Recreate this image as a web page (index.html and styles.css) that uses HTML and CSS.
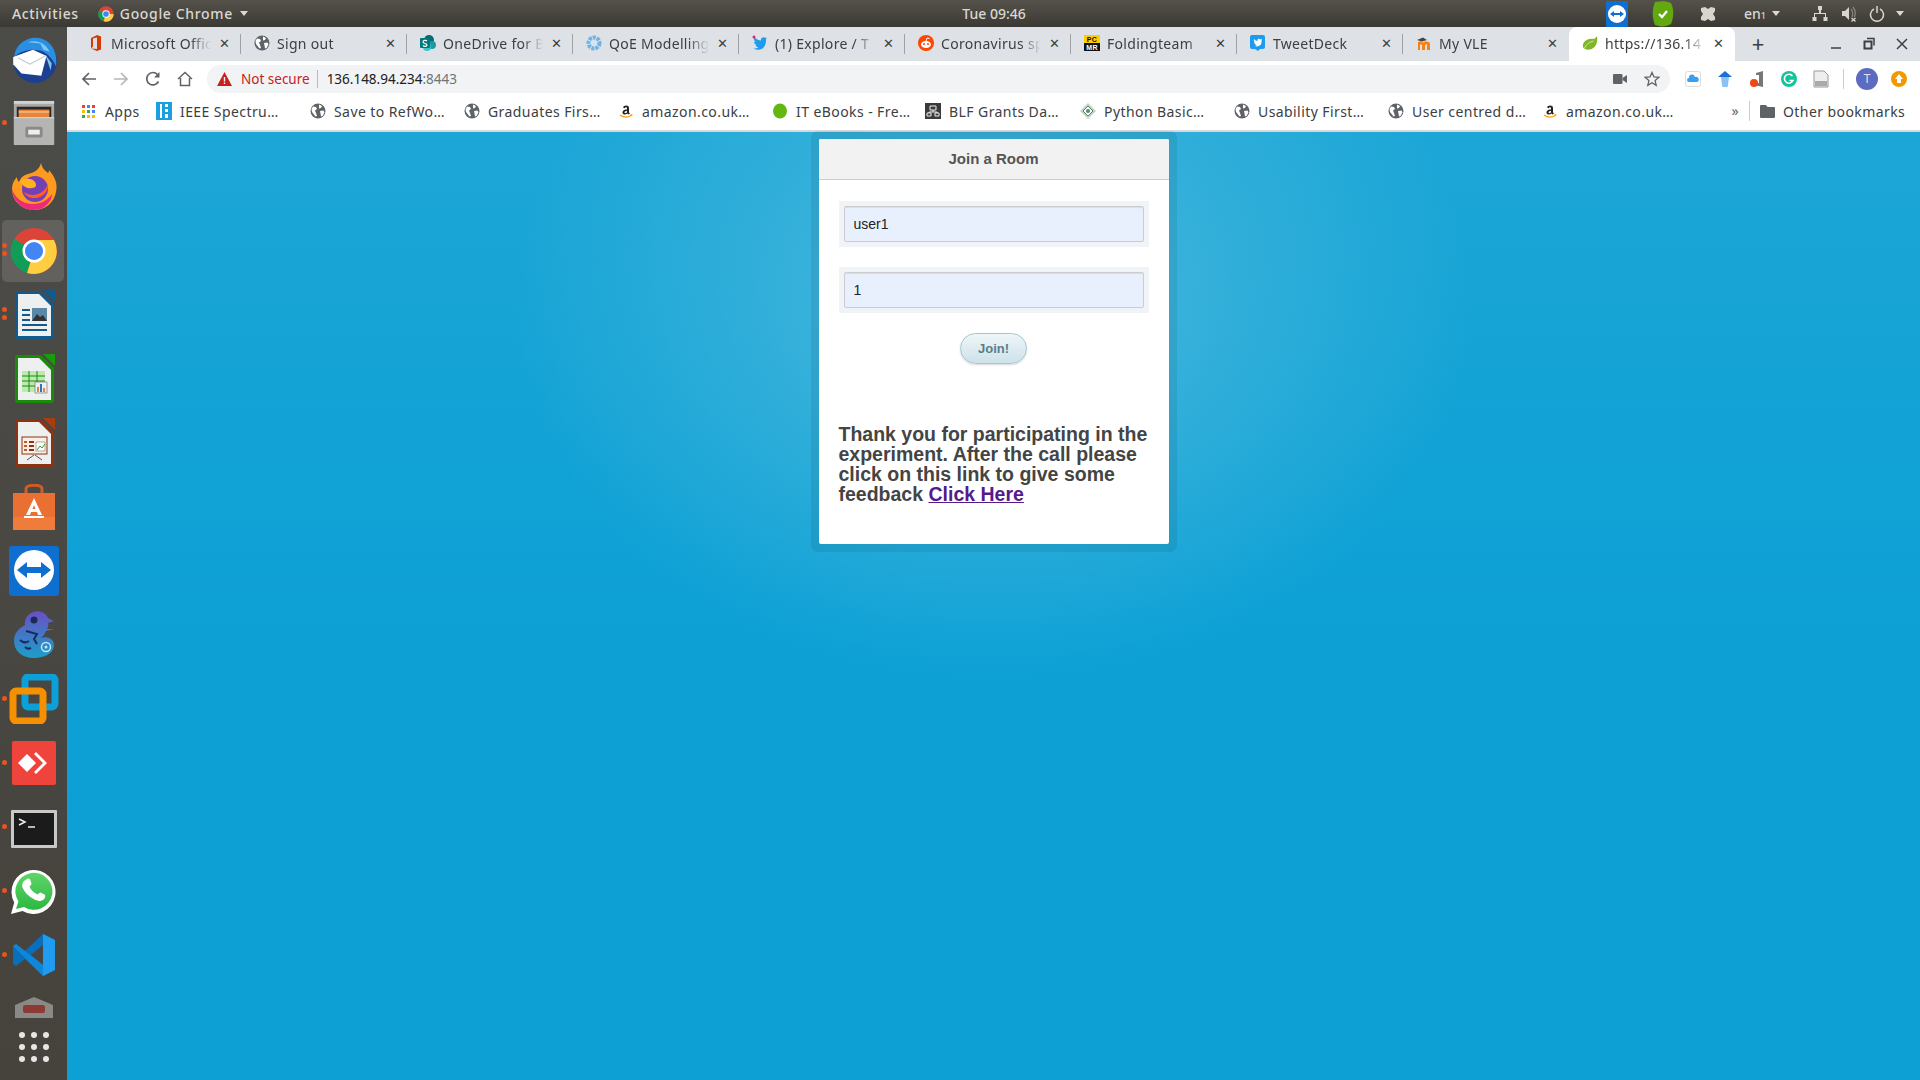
FILE: index.html
```html
<!doctype html>
<html>
<head>
<meta charset="utf-8">
<title>Join a Room</title>
<link rel="stylesheet" href="styles.css">
</head>
<body>
<svg class="defs" width="0" height="0">
  <defs>
    <linearGradient id="chameleon" x1="0" y1="0" x2="0" y2="1"><stop offset="0" stop-color="#6a4fc4"/><stop offset="1" stop-color="#1a9fc9"/></linearGradient>
    <linearGradient id="wa" x1="0" y1="0" x2="0" y2="1"><stop offset="0" stop-color="#5fd568"/><stop offset="1" stop-color="#2db842"/></linearGradient>
  </defs>
  <symbol id="globe" viewBox="0 0 16 16">
    <circle cx="8" cy="8" r="7.500" fill="#5f6368"/>
    <path d="M3 3.500l3 .5 1 2-2 1.500 1 2.500 1 3-1.500 .5L2 9 1.500 6zM9 1.500l3 1.500-1 2-2 .5zM10 8l3.500-.5 1 2-2 3.500-1.500 .5-.5-3z" fill="#fff"/>
  </symbol>
  <symbol id="amazon" viewBox="0 0 16 16">
    <path d="M5 4.500C5.500 2 11 1.500 11 5v4.500l1 1-1.500 1-1-1c-1.500 1.500-5 1.500-5-1 0-2.500 3-3 4.500-3V5.500C9 4 7 4 6.700 5.300zM9 8C7.500 8 6.500 8.500 6.500 9.500S8.500 10.500 9 9z" fill="#222"/>
    <path d="M2 12c3.500 2.500 8 2.500 11 .5" fill="none" stroke="#f90" stroke-width="1.300"/>
    <path d="M12 11.500l2.500-.5-.5 2.500z" fill="#f90"/>
  </symbol>
</svg>

<div class="topbar">
  <div class="top-left">
    <span class="top-item">Activities</span>
    <span class="top-app">
      <svg width="16" height="16" viewBox="0 0 48 48"><circle cx="24" cy="24" r="23" fill="#db4437"/><path d="M24 24L4 12A23 23 0 0 0 17 46z" fill="#0f9d58"/><path d="M24 24h23a23 23 0 0 1-30 22z" fill="#ffcd40"/><circle cx="24" cy="24" r="11" fill="#fff"/><circle cx="24" cy="24" r="8.500" fill="#4285f4"/></svg>
      <span class="top-item">Google Chrome</span>
      <i class="caret"></i>
    </span>
  </div>
  <div class="clock">Tue 09:46</div>
  <div class="tray">
    <svg class="tray-tv" width="22" height="26" viewBox="0 0 22 26"><rect width="22" height="26" fill="#0e6fd0"/><circle cx="11" cy="13" r="9" fill="#fff"/><path d="M4 13l4-3v2h6v-2l4 3-4 3v-2H8v2z" fill="#0e6fd0"/></svg>
    <svg class="tray-shield" width="22" height="26" viewBox="0 0 22 26"><path d="M3 1c6-1 12-1 16 1 3 6 3 14 0 21-5 3-11 3-16 1C0 17 0 8 3 1z" fill="#62a80f"/><path d="M7 13l3 3 5-6" fill="none" stroke="#fff" stroke-width="2.200"/></svg>
    <svg class="tray-drop" width="18" height="18" viewBox="0 0 18 18"><path d="M2 3l4-1 3 2 3-2 4 1v3l-2 3 2 3v3l-4 1-3-2-3 2-4-1v-3l2-3-2-3z" fill="#d8d5cc"/></svg>
    <span class="tray-lang">en<small>1</small></span>
    <i class="caret tray-caret"></i>
    <svg class="tray-net" width="16" height="16" viewBox="0 0 16 16"><path d="M6 0h4v4H9v3h5v4h1.500v4h-4v-4H13V8H3v3h1.500v4h-4v-4H2V7h5V4H6z" fill="#d8d5cc"/></svg>
    <svg class="tray-vol" width="16" height="16" viewBox="0 0 16 16"><path d="M1 5h3l4-4v13l-4-4H1z" fill="#d8d5cc"/><path d="M10 3c2 2 2 6 1 8M12 1c2.500 3 2.500 7 1.500 10" fill="none" stroke="#8a8780" stroke-width="1.200"/><path d="M10.500 12l4 3.500M14.500 12l-4 3.500" stroke="#d8d5cc" stroke-width="1.300"/></svg>
    <svg class="tray-pow" width="16" height="16" viewBox="0 0 16 16"><path d="M5 3a6.500 6.500 0 1 0 6 0" fill="none" stroke="#d8d5cc" stroke-width="1.500"/><path d="M8 0v7" stroke="#d8d5cc" stroke-width="1.500"/></svg>
    <i class="caret"></i>
  </div>
</div>

<div class="desktop">
  <div class="dock">
    <div class="dock-item"><svg width="50" height="50" viewBox="0 0 48 48"><circle cx="25" cy="26" r="21" fill="#1d3f8f"/><path d="M5 22C6 9 20 0 33 5c9 4 14 14 12 26-3-7-7-11-12-14-8-3-19-3-28 5z" fill="#2a8fe0"/><path d="M18 8c9-3 17 1 21 9l-6-2-3-6zM35 20l6 8-1 7z" fill="#7cc7f4"/><path d="M4 22l19-7 13 6-5 19-19-2-8-9z" fill="#fff"/><path d="M9 23l11 6 15-8" fill="none" stroke="#b9c4d4" stroke-width="1"/></svg></div>
    <div class="dock-item running"><svg width="46" height="46" viewBox="0 0 48 48"><rect x="3" y="1" width="42" height="46" rx="2" fill="#a9a9a8"/><rect x="3" y="1" width="42" height="3" fill="#d2d2d0"/><rect x="6" y="7" width="36" height="11" fill="#2a2a2a"/><rect x="8" y="10" width="32" height="8" fill="#e8853a"/><rect x="8" y="12" width="32" height="1" fill="#f7d9b8"/><rect x="3" y="18" width="42" height="29" fill="#b4b4b2"/><rect x="3" y="18" width="42" height="1" fill="#dedede"/><rect x="15" y="28" width="18" height="11" rx="2" fill="#8a8a88"/><rect x="18" y="31" width="12" height="5" fill="#eee"/></svg></div>
    <div class="dock-item"><svg width="48" height="50" viewBox="0 0 48 50"><path d="M31 1c1 5 4 8 7 10 1-1 1-2 1-3 6 7 9 14 7 22-2 11-11 18-22 18C12 48 2 39 2 27c0-5 2-9 5-12 0 3 1 4 2 5 2-5 5-7 9-8 4-1 11-3 13-11z" fill="#ff9a1f"/><path d="M24 48C13 48 3 40 2 27c3 9 11 15 21 15 8 0 15-4 19-10 0 3-1 5-2 7-4 6-10 9-16 9z" fill="#ee2a7b"/><circle cx="25" cy="27" r="13" fill="#7540b5"/><path d="M10 19c5-3 12-3 15 1 2 3 1 6-3 6-4 1-8-1-10-4z" fill="#ffb21f"/><path d="M38 21c1 8-5 15-13 15-5 0-9-2-11-6 4 3 9 4 14 2 5-2 9-6 10-11z" fill="#ff5c2b"/></svg></div>
    <div class="dock-item active running two"><svg width="48" height="48" viewBox="0 0 48 48"><circle cx="24" cy="24" r="23" fill="#db4437"/><path d="M24 24L4 12A23 23 0 0 0 17 46z" fill="#0f9d58"/><path d="M24 13h20a23 23 0 0 1-27 33l7-22z" fill="#ffcd40"/><path d="M24 24L14 30 4 12l10 6z" fill="#0f9d58"/><circle cx="24" cy="24" r="11.500" fill="#fff"/><circle cx="24" cy="24" r="9" fill="#4285f4"/></svg></div>
    <div class="dock-item running two"><svg width="42" height="50" viewBox="0 0 42 50"><path d="M2 3a2 2 0 0 1 2-2h24l13 13v32a3 3 0 0 1-3 3H4a3 3 0 0 1-2-3z" fill="#135a8c"/><path d="M5 4h21l12 12v30H5z" fill="#eef0f0"/><path d="M30 0h12v12z" fill="#135a8c"/><rect x="9" y="19" width="8" height="2" fill="#135a8c"/><rect x="9" y="24" width="8" height="2" fill="#135a8c"/><rect x="9" y="29" width="8" height="2" fill="#135a8c"/><rect x="9" y="34" width="25" height="2" fill="#135a8c"/><rect x="9" y="39" width="25" height="2" fill="#135a8c"/><rect x="19" y="18" width="15" height="13" fill="#5c88a8"/><path d="M19 31l5-7 3 3 3-2 4 6z" fill="#333"/></svg></div>
    <div class="dock-item"><svg width="42" height="50" viewBox="0 0 42 50"><path d="M2 3a2 2 0 0 1 2-2h24l13 13v32a3 3 0 0 1-3 3H4a3 3 0 0 1-2-3z" fill="#1b8a0b"/><path d="M5 4h21l12 12v30H5z" fill="#eef0f0"/><path d="M30 0h12v12z" fill="#1b9a0b"/><rect x="9" y="17" width="23" height="21" fill="#bdeab0"/><path d="M9 22h23M9 27h23M9 32h23M16 17v21M24 17v21" stroke="#1b8a0b" stroke-width="1"/><rect x="22" y="28" width="12" height="11" fill="#eee" stroke="#666" stroke-width=".6"/><rect x="24" y="33" width="2" height="5" fill="#e8853a"/><rect x="27" y="30" width="2" height="8" fill="#2a74c0"/><rect x="30" y="34" width="2" height="4" fill="#d84"/></svg></div>
    <div class="dock-item"><svg width="42" height="50" viewBox="0 0 42 50"><path d="M2 3a2 2 0 0 1 2-2h24l13 13v32a3 3 0 0 1-3 3H4a3 3 0 0 1-2-3z" fill="#8a3412"/><path d="M5 4h21l12 12v30H5z" fill="#eef0f0"/><path d="M30 0h12v12z" fill="#a63e10"/><rect x="9" y="19" width="25" height="17" fill="#fbeee4" stroke="#8a3412" stroke-width="1"/><rect x="11" y="23" width="3" height="2" fill="#c85a1e"/><rect x="11" y="27" width="3" height="2" fill="#c85a1e"/><rect x="11" y="31" width="3" height="2" fill="#c85a1e"/><rect x="16" y="23" width="5" height="2" fill="#8a3412"/><rect x="16" y="27" width="5" height="2" fill="#8a3412"/><rect x="16" y="31" width="5" height="2" fill="#8a3412"/><rect x="23" y="24" width="9" height="9" fill="#fff" stroke="#777" stroke-width=".6"/><path d="M24 32l3-4 2 2 3-4" fill="none" stroke="#3a9a20" stroke-width="1"/><path d="M21 37l-7 5M22 37l7 5" stroke="#555" stroke-width="1"/></svg></div>
    <div class="dock-item"><svg width="44" height="46" viewBox="0 0 44 46"><path d="M14 10V5c0-5 16-5 16 0v5" fill="none" stroke="#d45a25" stroke-width="3"/><path d="M1 9h42v37H1z" fill="#f07c3c"/><path d="M1 9h42v24H1z" fill="#e96f32"/><path d="M22 14l8 17h-4l-1-3h-6l-1 3h-4zM20.500 25h3L22 21zM12 32h20v2H12z" fill="#fff"/></svg></div>
    <div class="dock-item"><svg width="50" height="50" viewBox="0 0 50 50"><rect width="50" height="50" rx="3" fill="#0e6fd0"/><circle cx="25" cy="24" r="20" fill="#fff"/><path d="M8 24l10-8v5h14v-5l10 8-10 8v-5H18v5z" fill="#0e6fd0"/></svg></div>
    <div class="dock-item"><svg width="42" height="48" viewBox="0 0 42 48"><path d="M20 1c6-2 13 1 15 6l6 3-6 2c1 2 0 4-1 6h7l-8 2c-1 3-3 5-5 7 5-2 13 0 13 7 0 8-9 13-20 13C9 47 1 40 1 30c0-8 5-13 11-16-1-6 3-11 8-13z" fill="url(#chameleon)"/><circle cx="21" cy="9" r="3.500" fill="#1c2a5a"/><path d="M13 20l11 3-3 5 3 5M7 29c3 3 6 3 9 1M12 36c2 2 4 2 6 1" fill="none" stroke="#1c2a5a" stroke-width="2"/><circle cx="33" cy="36" r="4.500" fill="none" stroke="#bfe7f5" stroke-width="1.500"/><circle cx="33" cy="36" r="1.500" fill="#bfe7f5"/></svg></div>
    <div class="dock-item running"><svg width="50" height="50" viewBox="0 0 50 50"><rect x="16" y="3" width="30" height="30" rx="3" fill="none" stroke="#0c9fd8" stroke-width="7"/><rect x="4" y="17" width="30" height="30" rx="3" fill="none" stroke="#f59000" stroke-width="7"/></svg></div>
    <div class="dock-item running"><svg width="44" height="44" viewBox="0 0 44 44"><rect width="44" height="44" rx="2" fill="#ef443b"/><path d="M6 22l9-9 9 9-9 9z" fill="#fff"/><path d="M24 11l11 11-11 11-2-2 9-9-9-9z" fill="#fff"/></svg></div>
    <div class="dock-item running term"><svg width="46" height="38" viewBox="0 0 46 38"><rect width="46" height="38" rx="1" fill="#c8c8c8"/><rect x="3" y="3" width="40" height="32" fill="#1b1b1b"/><path d="M8 9l6 3-6 3" fill="none" stroke="#eee" stroke-width="1.500"/><path d="M17 17h7" stroke="#eee" stroke-width="1.500"/></svg></div>
    <div class="dock-item running"><svg width="46" height="46" viewBox="0 0 46 46"><path d="M0 46l3.200-11.500A22 22 0 1 1 11.500 43z" fill="#fff"/><path d="M5 41l2.400-7.500A18.500 18.500 0 1 1 13 39z" fill="url(#wa)"/><path d="M16 11c2-1 3 0 3.500 1.500l1 3c0 1-1 2-2 3 1 3 4 6 8 8 1-1 2-2 3-2l4 2c1 .500 1 2 0 4-2 3-6 3-10 1-6-3-10-7-12-12-1-4 1-7 4.500-8.500z" fill="#fff"/></svg></div>
    <div class="dock-item running"><svg width="44" height="44" viewBox="0 0 44 44"><path d="M31 1l12 6v30l-12 6L13 26l-9 7-3-2V13l3-2 9 7z" fill="#0a6fb8"/><path d="M31 1l12 6v30l-12 6z" fill="#1f9cf0"/><path d="M31 12L19 22l12 10z" fill="#474541"/><path d="M1 13l3-2 27 21v11z" fill="#0f86d8"/></svg></div>
    <div class="dock-item small"><svg width="40" height="22" viewBox="0 0 40 22"><path d="M1 9L20 1l19 8v13H1z" fill="#8b8985"/><rect x="9" y="9" width="22" height="8" rx="2" fill="#8e3a34"/></svg></div>
    <div class="dock-grid"><i></i><i></i><i></i><i></i><i></i><i></i><i></i><i></i><i></i></div>
  </div>

  <div class="browser">
    <div class="tabstrip">
      <div class="tab"><svg width="16" height="16" viewBox="0 0 16 16"><path d="M9 0l4 1.500v13L9 16 3 13.500 9 14V2.500L5 3.500v8l-2 2V3z" fill="#d83b01"/></svg><span class="tab-label">Microsoft Offic</span><span class="tab-x">✕</span></div>
      <div class="tab"><svg width="16" height="16"><use href="#globe"/></svg><span class="tab-label">Sign out</span><span class="tab-x">✕</span></div>
      <div class="tab"><svg width="16" height="16" viewBox="0 0 16 16"><circle cx="9" cy="5" r="5" fill="#036c70"/><circle cx="12" cy="10" r="4" fill="#1a9ba1"/><circle cx="7" cy="12" r="4" fill="#37c6d0"/><rect y="3" width="10" height="10" rx="1" fill="#03787c"/><path d="M7 6c-1-1-4-1-4 1s4 1 4 3-3 1.500-4 .5" fill="none" stroke="#fff" stroke-width="1.200"/></svg><span class="tab-label">OneDrive for B</span><span class="tab-x">✕</span></div>
      <div class="tab"><svg width="16" height="16" viewBox="0 0 16 16"><circle cx="8" cy="8" r="5.500" fill="none" stroke="#6db3e6" stroke-width="4" stroke-dasharray="3 1"/><circle cx="8" cy="8" r="2" fill="#cfe6f7"/></svg><span class="tab-label">QoE Modelling</span><span class="tab-x">✕</span></div>
      <div class="tab"><svg width="16" height="16" viewBox="0 0 16 16"><path d="M15 3c-.5.500-1 .500-1.500.700.500-.300 1-1 1-1.500-.5.300-1 .500-1.500.600C11.500 1.500 8.500 2.500 9 5.500 6.500 5.500 4 4 2.500 2 1.500 4 2 5.500 3.500 7c-.5 0-1 0-1.500-.5 0 2 1 3 3 3.500H3.500c.5 1.500 1.500 2 3 2-1 1-3 1.500-5 1.500 7 3.500 13-1 12.500-9z" fill="#1d9bf0"/><circle cx="2" cy="2" r="1.500" fill="#e0245e"/></svg><span class="tab-label">(1) Explore / T</span><span class="tab-x">✕</span></div>
      <div class="tab"><svg width="16" height="16" viewBox="0 0 16 16"><circle cx="8" cy="8" r="8" fill="#ff4500"/><ellipse cx="8" cy="9.500" rx="5" ry="3.500" fill="#fff"/><circle cx="6" cy="9" r="1" fill="#ff4500"/><circle cx="10" cy="9" r="1" fill="#ff4500"/><path d="M8 6l1-3 2.500 .5" fill="none" stroke="#fff"/></svg><span class="tab-label">Coronavirus sp</span><span class="tab-x">✕</span></div>
      <div class="tab"><svg width="16" height="16" viewBox="0 0 16 16"><rect width="16" height="8" fill="#ffcb05"/><rect y="8" width="16" height="8" fill="#111"/><text x="8" y="7" class="pcmr" fill="#111">PC</text><text x="8" y="15" class="pcmr" fill="#fff">MR</text></svg><span class="tab-label">Foldingteam</span><span class="tab-x">✕</span></div>
      <div class="tab"><svg width="16" height="16" viewBox="0 0 16 16"><rect width="15" height="14" rx="2" fill="#1d9bf0"/><path d="M5 14h5l-2 2z" fill="#1d9bf0"/><path d="M12 4l-1.500.500C9 3 7 4 7.500 6 6 6 5 5 4 4c-.500 1.500 0 2.500 1 3l-1 0c0 1 1 2 2 2l-1 .300c.500 .700 1 1 2 1-.500 .500-1.500 .700-2.500 .700 4 1.500 7.500-1 7-5z" fill="#fff"/></svg><span class="tab-label">TweetDeck</span><span class="tab-x">✕</span></div>
      <div class="tab"><svg width="16" height="16" viewBox="0 0 16 16"><path d="M2 15V8c0-2 4-2 5 0 1-2 7-2 7 1v6h-3V9.500H9V15H6V9.500H4V15z" fill="#f98012"/><path d="M1 5l6-2.500L11 5 6 6.500z" fill="#444"/></svg><span class="tab-label">My VLE</span><span class="tab-x">✕</span></div>
      <div class="tab tab-active"><svg width="16" height="16" viewBox="0 0 16 16"><path d="M15 1c1 6-1 12-7 13.500-3 .500-5.500-.500-6.500-1.500C-1 8 5 3 11 4c2 0 3-1.500 4-3z" fill="#7fb62a"/><path d="M2.500 13c2-4 5-6 9-7" fill="none" stroke="#e2efc7" stroke-width=".8"/></svg><span class="tab-label">https://136.14</span><span class="tab-x">✕</span></div>
      <div class="new-tab">+</div>
      <div class="win-btns">
        <svg width="14" height="14" viewBox="0 0 14 14"><path d="M2 11h10" stroke="#3c4043" stroke-width="1.500"/></svg>
        <svg width="14" height="14" viewBox="0 0 14 14"><path d="M5 1.500h7v7" fill="none" stroke="#3c4043" stroke-width="1.500"/><rect x="2.500" y="4.500" width="7" height="7" fill="none" stroke="#3c4043" stroke-width="2"/></svg>
        <svg width="14" height="14" viewBox="0 0 14 14"><path d="M2 2l10 10M12 2L2 12" stroke="#3c4043" stroke-width="1.500"/></svg>
      </div>
    </div>

    <div class="toolbar">
      <div class="nav-btns">
        <svg width="16" height="16" viewBox="0 0 16 16"><path d="M15 8H2M8 2L2 8l6 6" fill="none" stroke="#5f6368" stroke-width="1.700"/></svg>
        <svg width="16" height="16" viewBox="0 0 16 16"><path d="M1 8h13M8 2l6 6-6 6" fill="none" stroke="#b4b6b9" stroke-width="1.700"/></svg>
        <svg width="16" height="16" viewBox="0 0 16 16"><path d="M13.500 10.500A6.200 6.200 0 1 1 12.500 3.500" fill="none" stroke="#5f6368" stroke-width="1.700"/><path d="M14.500 1v5.500H9z" fill="#5f6368"/></svg>
        <svg width="16" height="16" viewBox="0 0 16 16"><path d="M1 8l7-6.500L15 8M3.500 7v7.500h9V7" fill="none" stroke="#5f6368" stroke-width="1.500"/></svg>
      </div>
      <div class="omnibox">
        <svg class="warn" width="15" height="14" viewBox="0 0 15 14"><path d="M7.500 0L15 14H0z" fill="#c5221f"/><path d="M6.800 5h1.400v4.500H6.800zM6.800 10.500h1.400v1.500H6.800z" fill="#fff"/></svg>
        <span class="not-secure">Not secure</span>
        <span class="url"><b>136.148.94.234</b>:8443</span>
        <span class="omni-right">
          <svg width="14" height="12" viewBox="0 0 14 12"><rect y="1" width="9.500" height="10" rx="1" fill="#5f6368"/><path d="M9.500 5L14 2v8L9.500 7z" fill="#5f6368"/></svg>
          <svg width="16" height="16" viewBox="0 0 16 16"><path d="M8 1.500l2 4.500 4.800 .4-3.700 3.200 1.100 4.800L8 11.800l-4.200 2.600 1.100-4.800L1.200 6.400 6 6z" fill="none" stroke="#5f6368" stroke-width="1.300"/></svg>
        </span>
      </div>
      <div class="ext-btns">
        <svg width="16" height="16" viewBox="0 0 16 16"><rect x=".5" y=".5" width="15" height="15" rx="2" fill="#fff" stroke="#ddd"/><path d="M4 11a2 2 0 0 1 0-4 3 3 0 0 1 6-1 2.500 2.500 0 0 1 2 5z" fill="#3a9ff0"/></svg>
        <svg width="16" height="16" viewBox="0 0 16 16"><path d="M8 0l7 6H1z" fill="#1a6fd8"/><path d="M4 6h8l-1 8a3 3 0 0 1-6 0z" fill="#8dc0f4"/></svg>
        <svg width="16" height="16" viewBox="0 0 16 16"><path d="M7 2l7-2v16l-7-1.500V12h3V4H7z" fill="#777"/><circle cx="5" cy="12" r="4" fill="#ea4b14"/></svg>
        <svg width="16" height="16" viewBox="0 0 16 16"><circle cx="8" cy="8" r="8" fill="#15c39a"/><path d="M11.500 5A4.500 4.500 0 1 0 12 9.500H8.500" fill="none" stroke="#fff" stroke-width="1.600"/></svg>
        <svg width="16" height="18" viewBox="0 0 16 18"><path d="M1 1h10l4 4v12H1z" fill="#eee" stroke="#999"/><rect x="2" y="11" width="12" height="5" fill="#aaa"/></svg>
        <i class="ext-sep"></i>
        <span class="avatar">T</span>
        <svg width="16" height="16" viewBox="0 0 16 16"><circle cx="8" cy="8" r="8" fill="#f29900"/><path d="M8 3l4 5H10v4H6V8H4z" fill="#fff"/></svg>
      </div>
    </div>

    <div class="bookmarks">
      <div class="bm bm-apps"><svg width="13" height="13" viewBox="0 0 13 13"><rect width="3" height="3" fill="#ea4335"/><rect x="5" width="3" height="3" fill="#4285f4"/><rect x="10" width="3" height="3" fill="#ea4335"/><rect y="5" width="3" height="3" fill="#fbbc05"/><rect x="5" y="5" width="3" height="3" fill="#34a853"/><rect x="10" y="5" width="3" height="3" fill="#4285f4"/><rect y="10" width="3" height="3" fill="#34a853"/><rect x="5" y="10" width="3" height="3" fill="#fbbc05"/><rect x="10" y="10" width="3" height="3" fill="#fbbc05"/></svg><span>Apps</span></div>
      <div class="bm"><svg width="16" height="18" viewBox="0 0 16 18"><rect width="16" height="18" fill="#1b9fe3"/><path d="M4 2h2v14H4zM9 2h3v3H9zM9 7h3v3H9zM9 12h3v4H9z" fill="#fff"/></svg><span>IEEE Spectru…</span></div>
      <div class="bm"><svg width="16" height="16"><use href="#globe"/></svg><span>Save to RefWo…</span></div>
      <div class="bm"><svg width="16" height="16"><use href="#globe"/></svg><span>Graduates Firs…</span></div>
      <div class="bm"><svg width="16" height="16"><use href="#amazon"/></svg><span>amazon.co.uk…</span></div>
      <div class="bm"><svg width="16" height="16" viewBox="0 0 16 16"><ellipse cx="8" cy="8" rx="7" ry="7.500" fill="#63b711"/></svg><span>IT eBooks - Fre…</span></div>
      <div class="bm"><svg width="16" height="16" viewBox="0 0 16 16"><rect width="16" height="16" fill="#3a3a3a"/><path d="M5 3h6v4H5zM2 10h4v3H2zM10 10h4v3h-4zM8 7v2M4 10V9h8v1" fill="none" stroke="#eee"/></svg><span>BLF Grants Da…</span></div>
      <div class="bm"><svg width="16" height="16" viewBox="0 0 16 16"><path d="M8 0l8 8-8 8-8-8z" fill="#c9cfc9"/><path d="M8 3l5 5-5 5-5-5z" fill="#fff" stroke="#558a5a"/><circle cx="8" cy="8" r="2" fill="#558a5a"/></svg><span>Python Basic…</span></div>
      <div class="bm"><svg width="16" height="16"><use href="#globe"/></svg><span>Usability First…</span></div>
      <div class="bm"><svg width="16" height="16"><use href="#globe"/></svg><span>User centred d…</span></div>
      <div class="bm"><svg width="16" height="16"><use href="#amazon"/></svg><span>amazon.co.uk…</span></div>
      <div class="bm-more">»</div>
      <div class="bm bm-other"><svg width="15" height="13" viewBox="0 0 15 13"><path d="M0 1a1 1 0 0 1 1-1h5l1.500 2H14a1 1 0 0 1 1 1v9a1 1 0 0 1-1 1H1a1 1 0 0 1-1-1z" fill="#5f6368"/></svg><span>Other bookmarks</span></div>
    </div>

    <div class="page">
      <div class="card">
        <div class="card-head">Join a Room</div>
        <div class="card-body">
          <div class="field"><input class="field-input" type="text" value="user1"></div>
          <div class="field"><input class="field-input" type="text" value="1"></div>
          <div class="join-row"><button class="join-btn">Join!</button></div>
          <h3 class="thanks">Thank you for participating in the experiment. After the call please click on this link to give some feedback <a href="#">Click Here</a></h3>
        </div>
      </div>
    </div>
  </div>
</div>
</body>
</html>
```

FILE: styles.css
```css
* {
    box-sizing: border-box;
}
html, body {
    margin: 0;
    height: 1080px;
    overflow: hidden;
}
body {
    display: flex;
    flex-direction: column;
    font-family: "Noto Sans", sans-serif;
    font-size: 14px;
    color: #3c4043;
}
.defs {
    position: absolute;
}
svg {
    display: block;
    flex: none;
}

/* ubuntu top bar */
.topbar {
    height: 27px;
    flex: none;
    display: grid;
    grid-template-columns: 1fr auto 1fr;
    align-items: center;
    background: linear-gradient(#55524b, #3b3934);
    color: #d9d8d2;
    font-weight: 500;
    font-size: 14px;
}
.top-left {
    display: flex;
    align-items: center;
    padding-left: 12px;
    gap: 19px;
}
.top-item {
    letter-spacing: 0.65px;
}
.top-app {
    display: flex;
    align-items: center;
    gap: 6px;
}
.caret {
    display: block;
    width: 0;
    height: 0;
    border: 4.5px solid transparent;
    border-top: 5px solid #d9d8d2;
    border-bottom: 0;
}
.top-app .caret {
    margin-left: 1px;
}
.clock {
    padding-left: 68px;
}
.tray {
    display: flex;
    align-items: center;
    justify-content: flex-end;
    padding-right: 16px;
}
.tray-tv {
    margin-right: 24px;
}
.tray-shield {
    margin-right: 25px;
}
.tray-drop {
    margin-right: 27px;
}
.tray-lang small {
    font-size: 9px;
}
.tray-caret {
    margin: 0 32px 0 6px;
}
.tray-net {
    margin-right: 13px;
}
.tray-vol {
    margin-right: 12px;
}
.tray-pow {
    margin-right: 11px;
}

/* launcher */
.desktop {
    flex: 1;
    display: flex;
    min-height: 0;
}
.dock {
    width: 67px;
    flex: none;
    display: flex;
    flex-direction: column;
    background: linear-gradient(#4b4b48, #494843 50%, #46423c);
}
.dock-item {
    height: 64px;
    flex: none;
    display: flex;
    align-items: center;
    justify-content: center;
    position: relative;
}
.dock-item.active::before {
    content: "";
    position: absolute;
    left: 2px;
    right: 3px;
    top: 1px;
    bottom: 1px;
    border-radius: 5px;
    background: rgba(255, 255, 255, 0.13);
}
.dock-item svg {
    position: relative;
}
.dock-item.term svg {
    top: 2px;
}
.dock-item.running::after {
    content: "";
    position: absolute;
    left: 2px;
    top: 29px;
    width: 5px;
    height: 5px;
    border-radius: 50%;
    background: #e95420;
}
.dock-item.two::after {
    top: 24px;
    box-shadow: 0 8px 0 #e95420;
}
.dock-item.small {
    height: 36px;
    margin-top: 2px;
}
.dock-grid {
    display: grid;
    grid-template-columns: repeat(3, 6px);
    gap: 6px;
    justify-content: center;
    margin-top: 7px;
}
.dock-grid i {
    width: 6px;
    height: 6px;
    border-radius: 50%;
    background: #e6e6e4;
}

/* chrome */
.browser {
    flex: 1;
    min-width: 0;
    display: flex;
    flex-direction: column;
}
.tabstrip {
    height: 34px;
    flex: none;
    display: flex;
    align-items: stretch;
    padding-left: 8px;
    background: #dee1e6;
}
.tab {
    width: 166px;
    flex: none;
    display: flex;
    align-items: center;
    padding: 0 8px 2px 13px;
    position: relative;
    font-size: 14px;
    letter-spacing: 0.3px;
}
.tab::after {
    content: "";
    position: absolute;
    right: 0;
    top: 7px;
    bottom: 7px;
    width: 1px;
    background: #9ea1a6;
}
.tab:nth-child(9)::after, .tab-active::after {
    display: none;
}
.tab-active {
    background: #fff;
    border-radius: 8px 8px 0 0;
}
.tab-label {
    flex: 1;
    min-width: 0;
    margin-left: 7px;
    white-space: nowrap;
    overflow: hidden;
    -webkit-mask-image: linear-gradient(90deg, #000 78%, transparent 98%);
    mask-image: linear-gradient(90deg, #000 78%, transparent 98%);
}
.tab-x {
    width: 16px;
    margin-left: 4px;
    text-align: center;
    font-size: 13px;
    color: #3c4043;
}
.pcmr {
    font: bold 7px "Liberation Sans", sans-serif;
    text-anchor: middle;
}
.new-tab {
    width: 46px;
    text-align: center;
    font-size: 22px;
    line-height: 32px;
    color: #3c4043;
}
.win-btns {
    display: flex;
    align-items: center;
    gap: 19px;
    margin-left: auto;
    padding-right: 11px;
}
.toolbar {
    height: 33px;
    flex: none;
    display: flex;
    align-items: center;
    padding-top: 3px;
    background: #fff;
}
.nav-btns {
    width: 140px;
    flex: none;
    display: flex;
    align-items: center;
    gap: 16px;
    padding-left: 14px;
}
.omnibox {
    width: 1463px;
    height: 28px;
    flex: none;
    display: flex;
    align-items: center;
    padding: 0 10px;
    border-radius: 14px;
    background: #f1f3f4;
    font-size: 13.5px;
}
.not-secure {
    margin-left: 9px;
    padding-right: 7px;
    border-right: 1px solid #bbb;
    color: #c5221f;
    line-height: 18px;
}
.url {
    margin-left: 9px;
    color: #70757a;
}
.url b {
    font-weight: 400;
    color: #202124;
}
.omni-right {
    margin-left: auto;
    display: flex;
    align-items: center;
    gap: 17px;
}
.ext-btns {
    display: flex;
    align-items: center;
    gap: 16px;
    padding-left: 15px;
}
.ext-sep {
    width: 1px;
    height: 20px;
    margin: 0 -4px 0 -2px;
    background: #ccc;
}
.avatar {
    width: 22px;
    height: 22px;
    margin-right: -3px;
    border-radius: 50%;
    background: #5c6bc0;
    color: #dfe3f7;
    font-size: 12px;
    line-height: 22px;
    text-align: center;
}
.bookmarks {
    height: 38px;
    flex: none;
    display: grid;
    grid-template-columns: 74px 154px 154px 154px 154px 153px 155px 154px 154px 154px 172px 36px 1fr;
    align-items: center;
    padding: 0 0 2px 15px;
    background: #fff;
    border-bottom: 2px solid #d6d8db;
    letter-spacing: 0.42px;
}
.bm {
    display: flex;
    align-items: center;
    gap: 8px;
    white-space: nowrap;
}
.bm-apps {
    gap: 10px;
}
.bm-more {
    color: #5f6368;
    padding-right: 10px;
    border-right: 1px solid #ccc;
    line-height: 20px;
    text-align: right;
}
.bm-other {
    padding-left: 10px;
}

/* the page itself */
.page {
    flex: 1;
    display: flex;
    flex-direction: column;
    align-items: center;
    padding-top: 7px;
    background: radial-gradient(ellipse 480px 380px at 926px 170px, #4ab9de, rgba(12, 160, 213, 0)), linear-gradient(#1ca6d6, #0ca0d5 520px);
    font-family: "Liberation Sans", Arial, sans-serif;
}
.card {
    width: 350px;
    height: 405px;
    background: #fff;
    border-radius: 2px;
    box-shadow: 0 0 0 8px rgba(0, 0, 0, 0.07);
}
.card-head {
    height: 41px;
    border-bottom: 1px solid #ccc;
    background: #f2f2f2;
    color: #555;
    font-size: 15px;
    font-weight: bold;
    line-height: 40px;
    text-align: center;
    border-radius: 2px 2px 0 0;
}
.card-body {
    padding: 21px 20px 0;
}
.field {
    padding: 5px;
    margin-bottom: 20px;
    background: #f0f4f7;
}
.field-input {
    display: block;
    width: 300px;
    height: 36px;
    padding: 0 9px;
    border: 1px solid #ccc;
    border-radius: 2px;
    background: #e8f0fe;
    color: #222;
    font: 14px "Liberation Sans", Arial, sans-serif;
    box-shadow: inset 0 1px 1px rgba(0, 0, 0, 0.08);
}
.join-row {
    display: flex;
    justify-content: center;
}
.join-btn {
    width: 67px;
    height: 31px;
    padding: 0;
    border: 1px solid #a9c5cc;
    border-radius: 16px;
    background: linear-gradient(#eef6f9, #cde2ea);
    color: #5a7d8a;
    font: bold 13px "Liberation Sans", Arial, sans-serif;
    box-shadow: 0 1px 2px rgba(0, 0, 0, 0.15);
}
.thanks {
    margin: 60px 0 0;
    font-size: 19.5px;
    line-height: 20px;
    color: #444;
}
.thanks a {
    color: #551a8b;
}
```
